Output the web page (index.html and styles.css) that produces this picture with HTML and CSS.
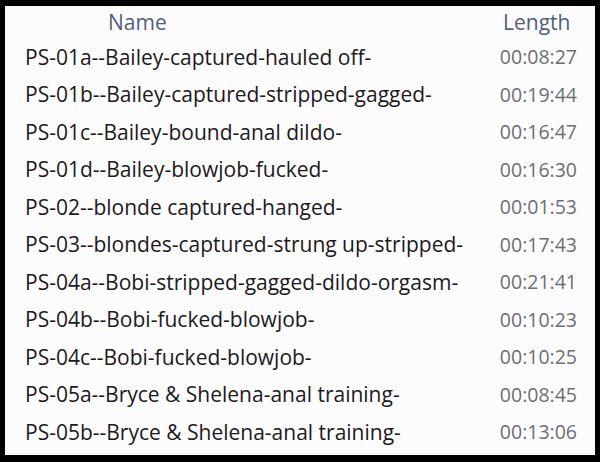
FILE: index.html
```html
<!DOCTYPE html>
<html lang="en">
<head>
  <meta charset="UTF-8">
  <title>Videos</title>
  <link rel="stylesheet" href="styles.css">
</head>
<body>
  <div class="window">
    <div class="head">
      <div class="col-name">Name</div>
      <div class="col-length">Length</div>
    </div>
    <div class="list">
      <div class="row"><span class="name">PS-01a--Bailey-captured-hauled off-</span><span class="time">00:08:27</span></div>
      <div class="row"><span class="name">PS-01b--Bailey-captured-stripped-gagged-</span><span class="time">00:19:44</span></div>
      <div class="row"><span class="name">PS-01c--Bailey-bound-anal dildo-</span><span class="time">00:16:47</span></div>
      <div class="row"><span class="name">PS-01d--Bailey-blowjob-fucked-</span><span class="time">00:16:30</span></div>
      <div class="row"><span class="name">PS-02--blonde captured-hanged-</span><span class="time">00:01:53</span></div>
      <div class="row"><span class="name">PS-03--blondes-captured-strung up-stripped-</span><span class="time">00:17:43</span></div>
      <div class="row"><span class="name">PS-04a--Bobi-stripped-gagged-dildo-orgasm-</span><span class="time">00:21:41</span></div>
      <div class="row"><span class="name">PS-04b--Bobi-fucked-blowjob-</span><span class="time">00:10:23</span></div>
      <div class="row"><span class="name">PS-04c--Bobi-fucked-blowjob-</span><span class="time">00:10:25</span></div>
      <div class="row"><span class="name">PS-05a--Bryce &amp; Shelena-anal training-</span><span class="time">00:08:45</span></div>
      <div class="row"><span class="name">PS-05b--Bryce &amp; Shelena-anal training-</span><span class="time">00:13:06</span></div>
    </div>
  </div>
</body>
</html>
```

FILE: styles.css
```css
html, body {
  height: 100%;
}
body {
  margin: 0;
  background-color: #000;
  font-family: "Open Sans", "Noto Sans", sans-serif;
  font-size: 21px;
  display: flex;
  padding: 6px 5px 7px 5px;
  box-sizing: border-box;
}
.window {
  flex: 1;
  background-color: #fcfcfd;
}
.head {
  display: grid;
  grid-template-columns: 1fr 80px;
  height: 32px;
  align-items: center;
  padding-right: 18px;
  color: #50607a;
}
.col-name {
  padding-left: 103px;
}
.col-length {
  padding-left: 6px;
}
.row {
  display: grid;
  grid-template-columns: 1fr 80px;
  height: 37.5px;
  align-items: center;
  padding-left: 20px;
  padding-right: 18px;
}
.name {
  color: #1c1a1c;
  white-space: nowrap;
}
.time {
  color: #6e6e72;
  font-size: 19.5px;
  text-align: right;
}
```
